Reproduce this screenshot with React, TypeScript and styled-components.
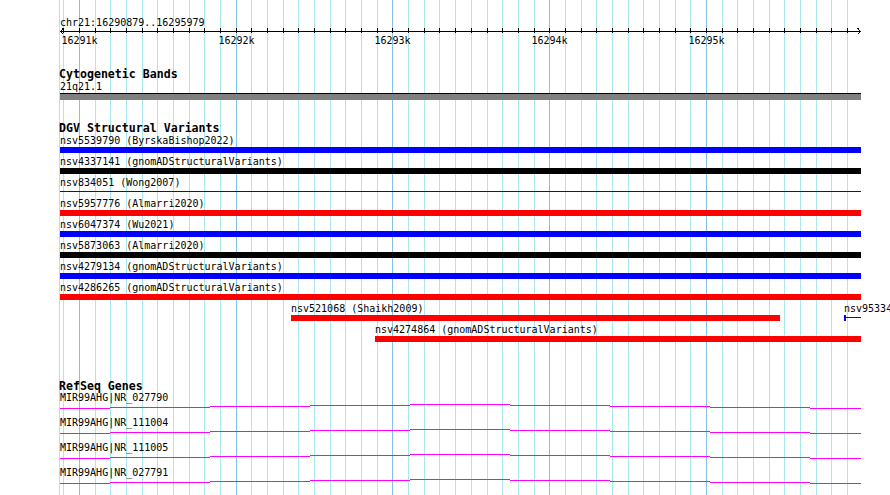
import React from 'react'
import styled, { createGlobalStyle } from 'styled-components'

const VIEW_START = 16290879
const VIEW_END = 16295979
const TRACK_LEFT = 60
const TRACK_WIDTH = 801
const PX_PER_BP = 0.15675

// x inside the track for a base position
const toX = (bp: number) => Math.round((bp - VIEW_START) * PX_PER_BP)

type Feature = {
  name: string
  source?: string
  start: number
  end: number
  color: string
  thin?: boolean
  tick?: boolean
}

const variantRows: Feature[][] = [
  [{ name: 'nsv5539790', source: 'ByrskaBishop2022', start: 16280000, end: 16300000, color: '#0000ff' }],
  [{ name: 'nsv4337141', source: 'gnomADStructuralVariants', start: 16280000, end: 16300000, color: '#000000' }],
  [{ name: 'nsv834051', source: 'Wong2007', start: 16280000, end: 16300000, color: '#0000ff', thin: true }],
  [{ name: 'nsv5957776', source: 'Almarri2020', start: 16280000, end: 16300000, color: '#ff0000' }],
  [{ name: 'nsv6047374', source: 'Wu2021', start: 16280000, end: 16300000, color: '#0000ff' }],
  [{ name: 'nsv5873063', source: 'Almarri2020', start: 16280000, end: 16300000, color: '#000000' }],
  [{ name: 'nsv4279134', source: 'gnomADStructuralVariants', start: 16280000, end: 16300000, color: '#0000ff' }],
  [{ name: 'nsv4286265', source: 'gnomADStructuralVariants', start: 16280000, end: 16300000, color: '#ff0000' }],
  [
    { name: 'nsv521068', source: 'Shaikh2009', start: 16292353, end: 16295472, color: '#ff0000' },
    { name: 'nsv95334', start: 16295881, end: 16300000, color: '#0000ff', thin: true, tick: true },
  ],
  [{ name: 'nsv4274864', source: 'gnomADStructuralVariants', start: 16292889, end: 16300000, color: '#ff0000' }],
]

const genes = ['MIR99AHG|NR_027790', 'MIR99AHG|NR_111004', 'MIR99AHG|NR_111005', 'MIR99AHG|NR_027791']

// intron line drawn as small steps (offset from top of the glyph)
const intronSteps = [
  { from: 0, to: 50, dy: 4 },
  { from: 50, to: 150, dy: 3 },
  { from: 150, to: 250, dy: 2 },
  { from: 250, to: 350, dy: 1 },
  { from: 350, to: 450, dy: 0 },
  { from: 450, to: 550, dy: 1 },
  { from: 550, to: 650, dy: 2 },
  { from: 650, to: 750, dy: 3 },
  { from: 750, to: 801, dy: 4 },
]

const gridBases: number[] = []
for (let bp = 16290900; bp <= VIEW_END; bp += 100) gridBases.push(bp)
const rulerLabels = [16291000, 16292000, 16293000, 16294000, 16295000]

const GlobalStyle = createGlobalStyle`
  html, body {
    margin: 0;
    padding: 0;
    background: #ffffff;
  }
`

const Page = styled.div`
  position: relative;
  width: 890px;
  height: 495px;
  overflow: hidden;
  background: #ffffff;
  color: #000000;
  font-family: "DejaVu Sans Mono", "Liberation Mono", monospace;
  font-size: 10px;
`

const GridLayer = styled.div`
  position: absolute;
  inset: 0;
  z-index: 0;
`

const GridLine = styled.div<{ $major?: boolean }>`
  position: absolute;
  top: 0;
  bottom: 0;
  width: 1px;
  background: ${p => (p.$major ? '#84c3e8' : '#aae8ee')};
`

const Content = styled.div`
  position: relative;
  z-index: 1;
  display: flex;
  flex-direction: column;
`

const Locus = styled.div`
  margin: 17px 0 0 ${TRACK_LEFT}px;
  height: 11px;
  line-height: 11px;
  white-space: nowrap;
`

const RulerSvg = styled.svg`
  display: block;
  margin-left: ${TRACK_LEFT}px;
  overflow: visible;
`

const RulerLabels = styled.div`
  position: relative;
  margin-left: ${TRACK_LEFT}px;
  height: 11px;
  line-height: 11px;
`

const RulerLabel = styled.span`
  position: absolute;
  top: 0;
  transform: translateX(-50%);
  white-space: nowrap;
`

const TrackTitle = styled.div<{ $gap: number }>`
  margin: ${p => p.$gap}px 0 0 59px;
  height: 12px;
  line-height: 12px;
  font-size: 11.6px;
  font-weight: bold;
  white-space: nowrap;
`

const BandLabel = styled.div`
  margin: 1px 0 0 ${TRACK_LEFT}px;
  height: 12px;
  line-height: 12px;
`

const Band = styled.div`
  margin-left: ${TRACK_LEFT}px;
  width: ${TRACK_WIDTH}px;
  height: 6px;
  border-top: 1px solid #000000;
  background: #808080;
`

const Lanes = styled.div<{ $gap: number }>`
  margin-top: ${p => p.$gap}px;
  display: flex;
  flex-direction: column;
`

const Lane = styled.div<{ $height: number }>`
  position: relative;
  height: ${p => p.$height}px;
`

const Clip = styled.div`
  position: absolute;
  inset: 0 0 0 ${TRACK_LEFT}px;
  width: ${TRACK_WIDTH}px;
  overflow: visible;
`

const FeatureBox = styled.div`
  position: absolute;
  top: 0;
`

const FeatureLabel = styled.div`
  height: 12px;
  line-height: 12px;
  white-space: nowrap;
`

const Bar = styled.div<{ $color: string; $thin?: boolean }>`
  position: relative;
  height: 6px;
  background: ${p => (p.$thin ? 'transparent' : p.$color)};

  &::before {
    content: '';
    display: ${p => (p.$thin ? 'block' : 'none')};
    position: absolute;
    left: 0;
    right: 0;
    top: 2px;
    height: 1px;
    background: ${p => p.$color};
  }
`

const Tick = styled.span<{ $color: string }>`
  position: absolute;
  left: 0;
  top: 0;
  width: 2px;
  height: 6px;
  background: ${p => p.$color};
`

const GeneLabel = styled.div`
  margin-left: ${TRACK_LEFT}px;
  height: 12px;
  line-height: 12px;
  white-space: nowrap;
`

const GeneSvg = styled.svg`
  display: block;
  margin-left: ${TRACK_LEFT}px;
`

const Ruler = () => (
  <>
    <RulerSvg width={TRACK_WIDTH + 1} height={7} shapeRendering="crispEdges">
      <rect x={0} y={3} width={TRACK_WIDTH} height={1} fill="#000" />
      {gridBases.map(bp => (
        <rect key={bp} x={toX(bp)} y={0} width={1} height={5} fill="#000" />
      ))}
      <path d="M3.5 0 L0.5 3.5 L3.5 6.5" stroke="#000" fill="none" />
      <path d="M797.5 0 L800.5 3.5 L797.5 6.5" stroke="#000" fill="none" />
    </RulerSvg>
    <RulerLabels>
      {rulerLabels.map(bp => (
        <RulerLabel key={bp} style={{ left: toX(bp) + 0.5 }}>
          {bp / 1000}k
        </RulerLabel>
      ))}
    </RulerLabels>
  </>
)

const VariantLane = ({ features }: { features: Feature[] }) => (
  <Lane $height={21}>
    <Clip>
      {features.map(f => {
        const x = Math.max(0, toX(f.start))
        const x2 = Math.min(TRACK_WIDTH, toX(f.end))
        return (
          <FeatureBox key={f.name} style={{ left: x, width: x2 - x }}>
            <FeatureLabel>
              {f.name}
              {f.source ? ` (${f.source})` : ''}
            </FeatureLabel>
            <Bar $color={f.color} $thin={f.thin}>
              {f.tick && <Tick $color={f.color} />}
            </Bar>
          </FeatureBox>
        )
      })}
    </Clip>
  </Lane>
)

const GeneLane = ({ name }: { name: string }) => (
  <Lane $height={25}>
    <GeneLabel>{name}</GeneLabel>
    <GeneSvg width={TRACK_WIDTH} height={5} shapeRendering="crispEdges">
      {intronSteps.map(s => (
        <rect key={s.from} x={s.from} y={s.dy} width={s.to - s.from} height={1} fill="#ff00ff" />
      ))}
    </GeneSvg>
  </Lane>
)

const App = () => {
  return (
    <>
      <GlobalStyle />
      <Page>
        <GridLayer>
          <GridLine style={{ left: TRACK_LEFT - 1 }} />
          {gridBases.map(bp => (
            <GridLine key={bp} $major={bp % 1000 === 0} style={{ left: TRACK_LEFT + toX(bp) }} />
          ))}
        </GridLayer>
        <Content>
          <Locus>chr21:16290879..16295979</Locus>
          <Ruler />

          <TrackTitle $gap={22}>Cytogenetic Bands</TrackTitle>
          <BandLabel>21q21.1</BandLabel>
          <Band />

          <TrackTitle $gap={22}>DGV Structural Variants</TrackTitle>
          <Lanes $gap={1}>
            {variantRows.map((row, i) => (
              <VariantLane key={i} features={row} />
            ))}
          </Lanes>

          <TrackTitle $gap={35}>RefSeq Genes</TrackTitle>
          <Lanes $gap={0}>
            {genes.map(g => (
              <GeneLane key={g} name={g} />
            ))}
          </Lanes>
        </Content>
      </Page>
    </>
  )
}

export default App
